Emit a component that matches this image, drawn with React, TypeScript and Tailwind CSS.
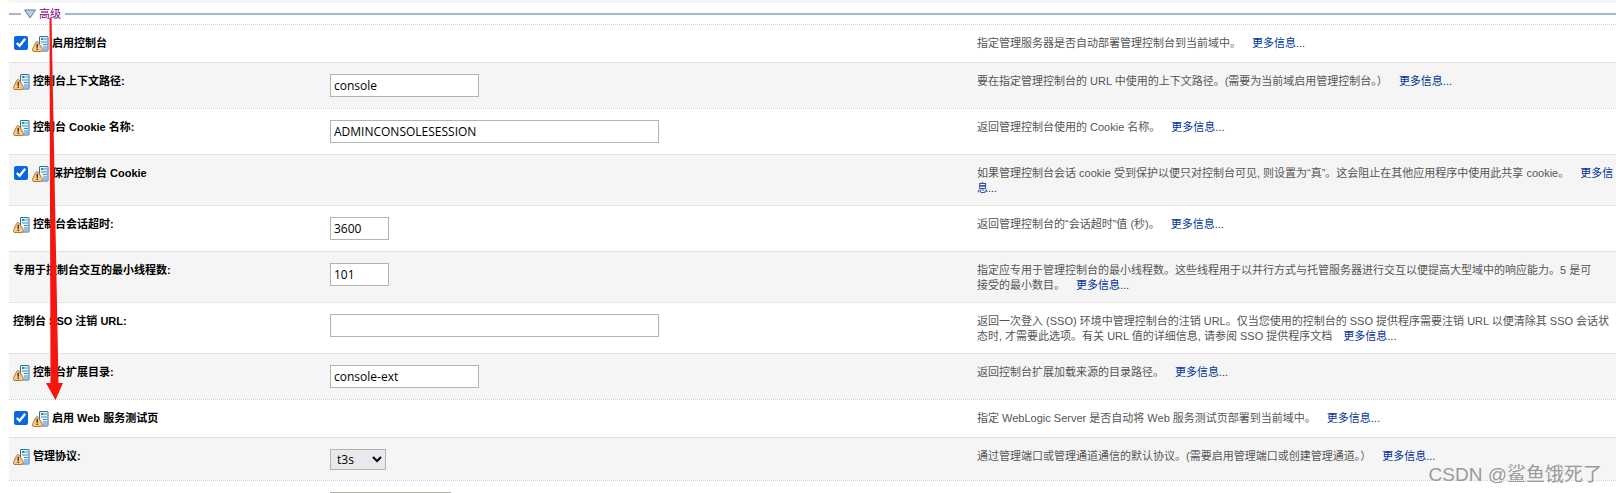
import React from 'react';

interface Row {
  label: string;
  desc: string;
  check?: boolean;
  icon?: boolean;
  height: number;
  control?: React.ReactNode;
}

const inputClass =
  'block h-[23px] border border-[#b4b4ad] bg-white px-[3px] text-[12px] text-black outline-none';
const inputFont = { fontFamily: '"Open Sans", sans-serif' };

const rows: Row[] = [
  { label: '启用控制台', check: true, icon: true, height: 38, desc: '指定管理服务器是否自动部署管理控制台到当前域中。' },
  {
    label: '控制台上下文路径:',
    icon: true,
    height: 46,
    control: <input readOnly value="console" style={inputFont} className={`${inputClass} w-[149px]`} />,
    desc: '要在指定管理控制台的 URL 中使用的上下文路径。(需要为当前域启用管理控制台。）',
  },
  {
    label: '控制台 Cookie 名称:',
    icon: true,
    height: 46,
    control: <input readOnly value="ADMINCONSOLESESSION" style={inputFont} className={`${inputClass} w-[329px]`} />,
    desc: '返回管理控制台使用的 Cookie 名称。',
  },
  {
    label: '保护控制台 Cookie',
    check: true,
    icon: true,
    height: 51,
    desc: '如果管理控制台会话 cookie 受到保护以便只对控制台可见, 则设置为“真”。这会阻止在其他应用程序中使用此共享 cookie。',
  },
  {
    label: '控制台会话超时:',
    icon: true,
    height: 46,
    control: <input readOnly value="3600" style={inputFont} className={`${inputClass} w-[59px]`} />,
    desc: '返回管理控制台的“会话超时”值 (秒)。',
  },
  {
    label: '专用于控制台交互的最小线程数:',
    height: 51,
    control: <input readOnly value="101" style={inputFont} className={`${inputClass} w-[59px]`} />,
    desc: '指定应专用于管理控制台的最小线程数。这些线程用于以并行方式与托管服务器进行交互以便提高大型域中的响应能力。5 是可\n接受的最小数目。',
  },
  {
    label: '控制台 SSO 注销 URL:',
    height: 51,
    control: <input readOnly value="" style={inputFont} className={`${inputClass} w-[329px]`} />,
    desc: '返回一次登入 (SSO) 环境中管理控制台的注销 URL。仅当您使用的控制台的 SSO 提供程序需要注销 URL 以便清除其 SSO 会话状态时, 才需要此选项。有关 URL 值的详细信息, 请参阅 SSO 提供程序文档',
  },
  {
    label: '控制台扩展目录:',
    icon: true,
    height: 46,
    control: <input readOnly value="console-ext" style={inputFont} className={`${inputClass} w-[149px]`} />,
    desc: '返回控制台扩展加载来源的目录路径。',
  },
  { label: '启用 Web 服务测试页', check: true, icon: true, height: 38, desc: '指定 WebLogic Server 是否自动将 Web 服务测试页部署到当前域中。' },
  {
    label: '管理协议:',
    icon: true,
    height: 43,
    control: (
      <select
        style={inputFont}
        className="block h-[21px] w-[56px] border border-[#b4b4ad] bg-[#e9e9ed] pl-[2px] text-[12px] text-black"
      >
        <option>t3s</option>
      </select>
    ),
    desc: '通过管理端口或管理通道通信的默认协议。(需要启用管理端口或创建管理通道。）',
  },
];

function WarnIcon() {
  return (
    <svg width="17" height="16" viewBox="0 0 17 16" className="shrink-0">
      <rect x="7.5" y="0.5" width="8.5" height="14.5" rx="0.5" fill="#e6f2fb" stroke="#2f6fa8" />
      <rect x="9" y="2" width="2.5" height="2" fill="#2aa34a" />
      <path d="M12 3h3M9 6h6M11 8.5h4M11 11h4M11 13h4" stroke="#3f8fd0" strokeWidth="1" />
      <path
        d="M5 5.5 C6 5.5 6.5 6.5 7 7.5 L10 12.5 C11 14.5 10 15.5 8.5 15.5 L2 15.5 C0.5 15.5 0 14.5 0.8 12.5 L3.2 7.5 C3.7 6.5 4 5.5 5 5.5 Z"
        fill="#f4c98c"
        stroke="#bd7428"
      />
      <rect x="4.5" y="7.8" width="1.4" height="4" fill="#4a3010" />
      <rect x="4.5" y="12.6" width="1.4" height="1.4" fill="#4a3010" />
    </svg>
  );
}

function Arrow() {
  return (
    <svg width="70" height="400" viewBox="0 0 70 400" className="absolute left-0 top-0 pointer-events-none">
      <polygon points="49.5,18 51.5,18 58.5,383 63,383 55.5,400 46,383 50.5,383" fill="#f5170f" />
    </svg>
  );
}

export default function App() {
  return (
    <div
      className="relative h-[493px] w-[1616px] overflow-hidden bg-white"
      style={{ fontFamily: '"Liberation Sans", "Noto Sans CJK SC", sans-serif' }}
    >
      <div className="ml-[9px] h-[3px] bg-[#f5f5f5]" />

      <div className="flex h-[21px] items-center pl-[9px] pt-[1px]">
        <div className="h-[2px] w-[12px] bg-[#a3b9d3]" />
        <svg width="12" height="10" viewBox="0 0 12 10" className="ml-[3px]">
          <path d="M0.5 1 H11.5 L6 9 Z" fill="#b9cde3" stroke="#5f7f9f" strokeWidth="1" />
        </svg>
        <span className="ml-[3px] text-[11px] leading-none text-[#800080]">高级</span>
        <div className="ml-[4px] h-[2px] flex-1 bg-[#a3b9d3]" />
      </div>

      <div className="ml-[9px]">
        {rows.map((row, i) => (
          <div
            key={row.label}
            className={`flex border-t border-dotted border-[#cfcfcf] ${i % 2 === 1 ? 'bg-[#f5f5f5]' : 'bg-white'}`}
            style={{ height: row.height }}
          >
            <div className="flex w-[321px] items-start pl-[4px] pt-[11px]">
              {row.check && (
                <input type="checkbox" readOnly checked className="ml-[1px] mr-[4px] h-[14px] w-[14px] accent-[#0b66e4]" />
              )}
              {row.icon && <WarnIcon />}
              <span className={`text-[11px] font-bold leading-[14px] text-black ${row.icon ? 'ml-[3px]' : ''}`}>
                {row.label}
              </span>
            </div>
            <div className="w-[647px] pt-[11px]">{row.control}</div>
            <div className="w-[639px] whitespace-pre-line pt-[11px] text-[11px] leading-[15px] text-[#555555]">
              {row.desc}
              <a className="ml-[11px] text-[#003399]">更多信息...</a>
            </div>
          </div>
        ))}
        <div className="h-[13px] border-t border-dotted border-[#cfcfcf] pt-[11px]">
          <div className="ml-[321px] h-[1px] w-[121px] bg-[#b4b4ad]" />
        </div>
      </div>

      <Arrow />
      <div className="absolute right-[14px] top-[463px] text-[19px] leading-[24px] text-[#9a9a9a]">CSDN @鲨鱼饿死了</div>
    </div>
  );
}
